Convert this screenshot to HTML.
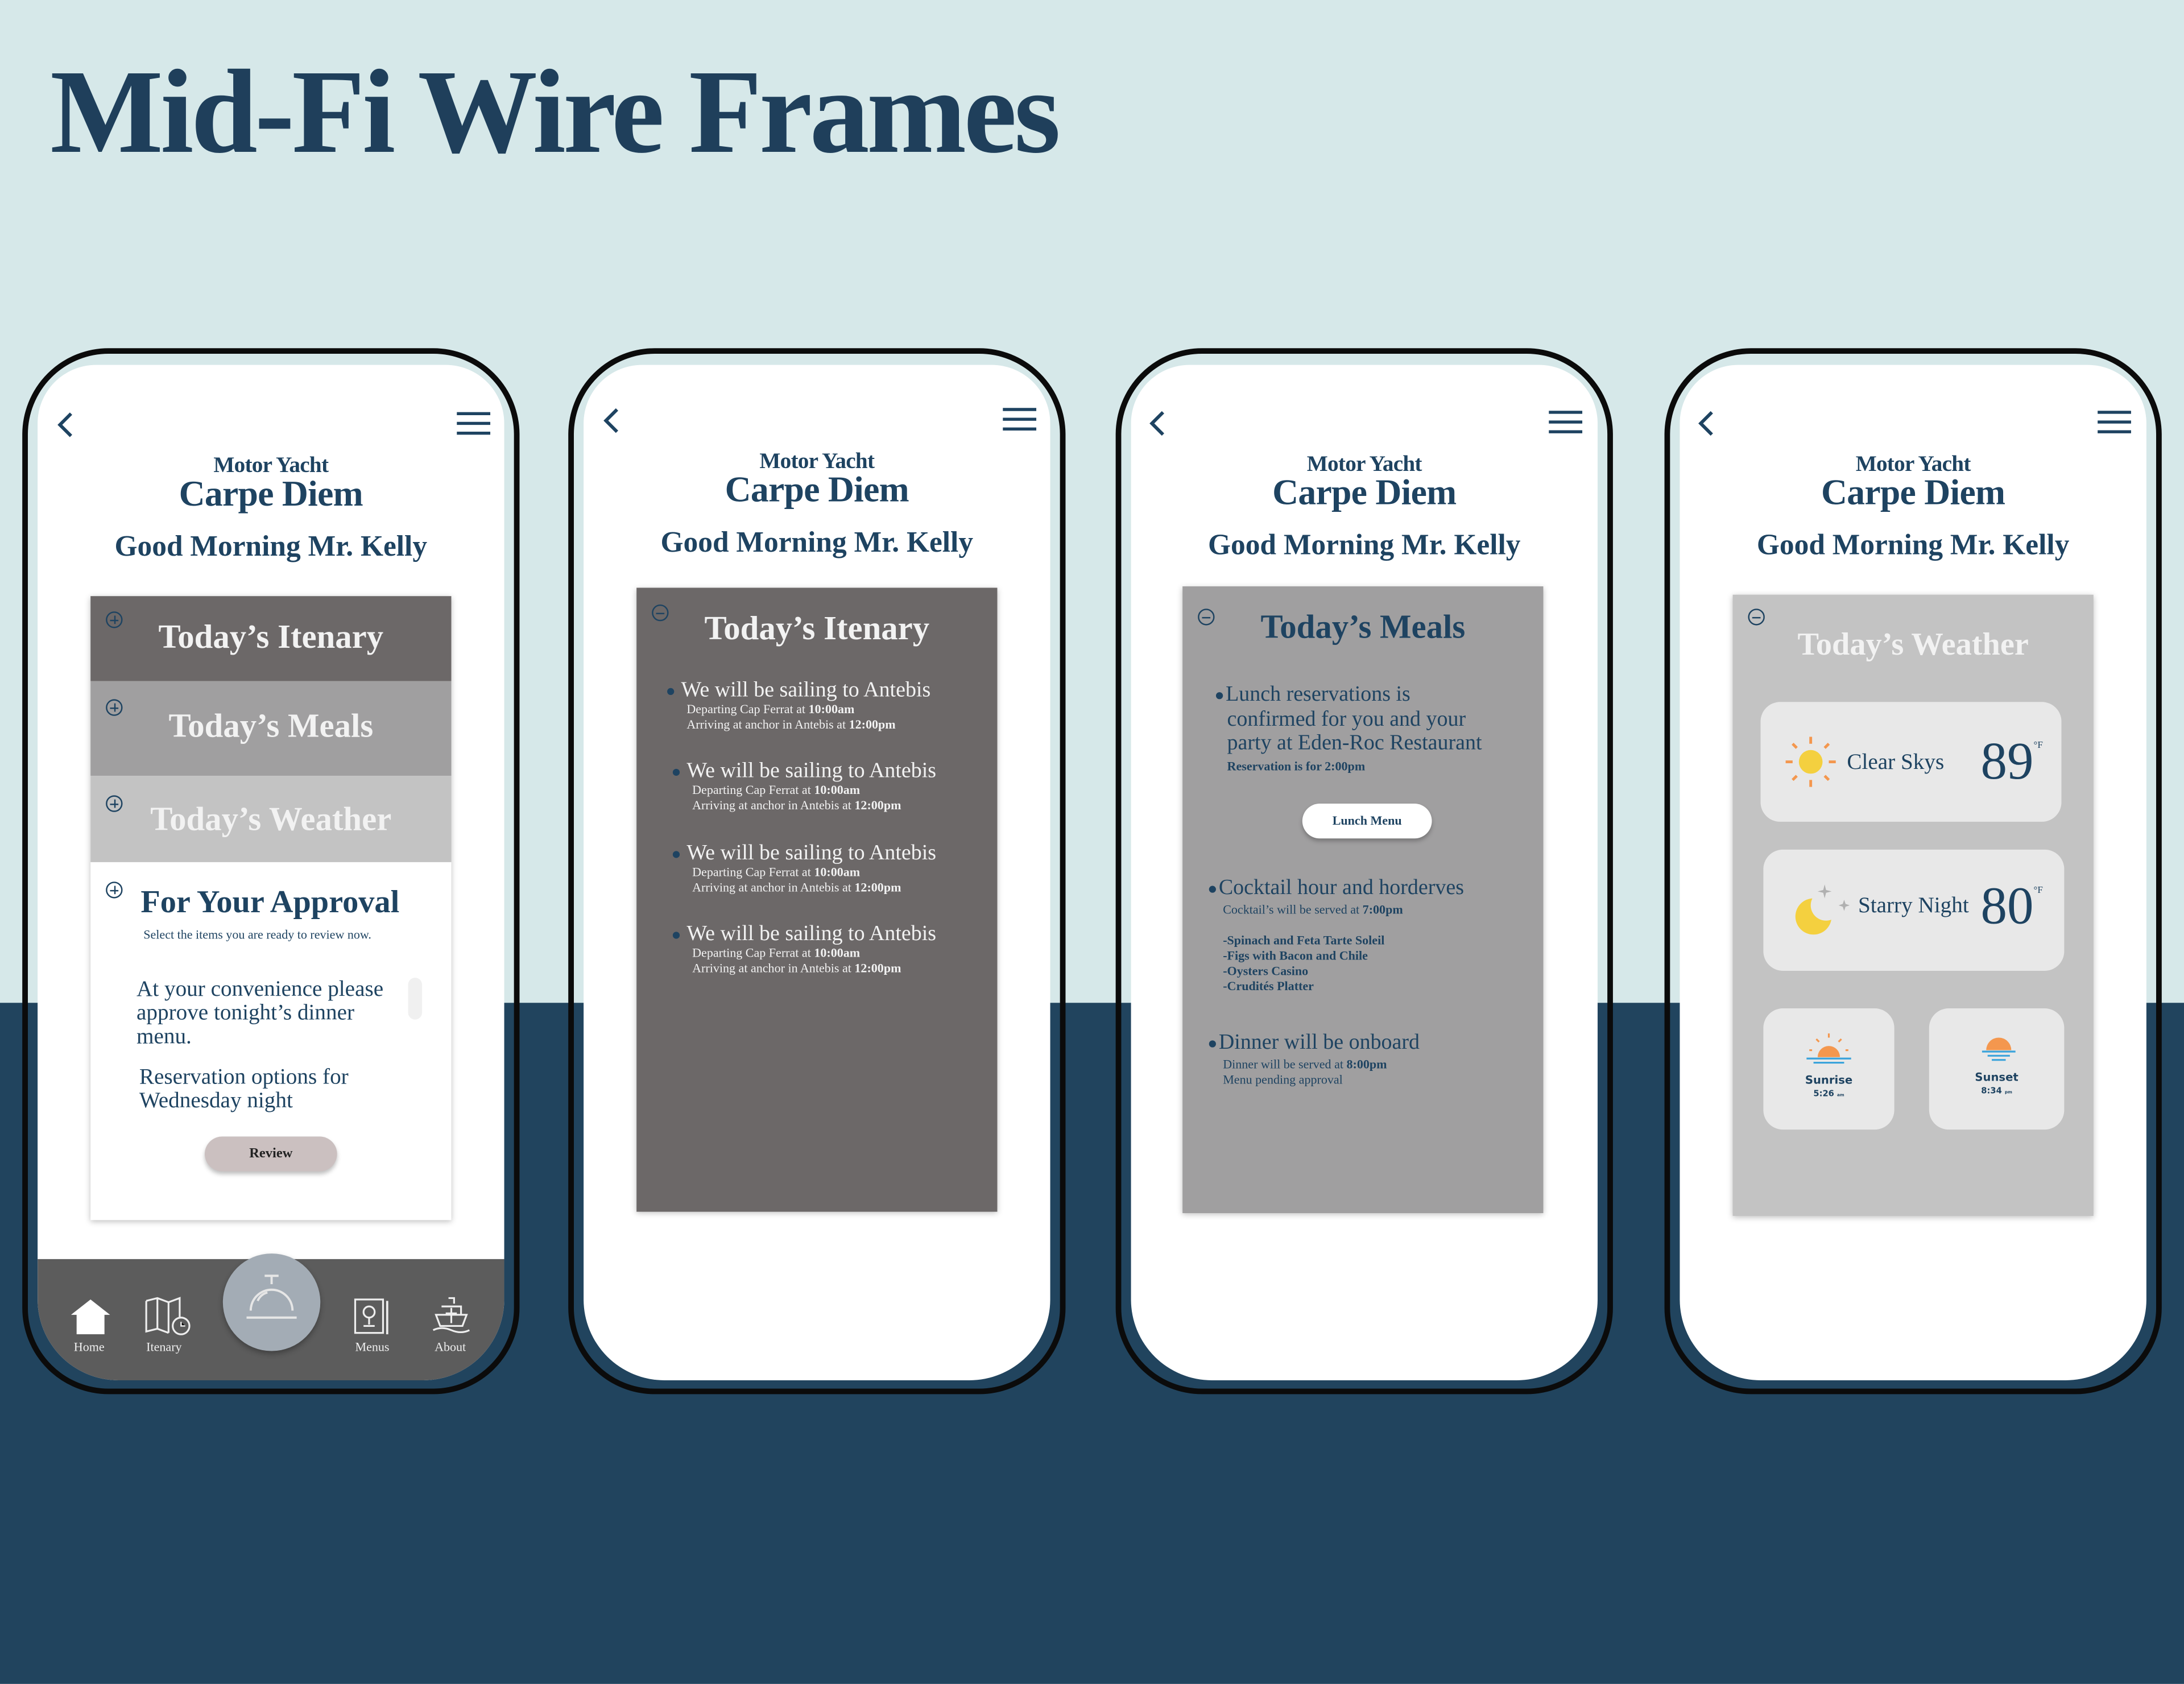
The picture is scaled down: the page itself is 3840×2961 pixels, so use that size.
<!DOCTYPE html>
<html><head><meta charset="utf-8"><style>
*{margin:0;padding:0;box-sizing:border-box}
html,body{width:3840px;height:2960px;overflow:hidden;background:#d6e8e9}
#w{position:absolute;left:0;top:0;width:1568px;height:1209px;transform:scale(2.44898);transform-origin:0 0;background:#d6e8e9;font-family:"Liberation Serif",serif;color:#1e4361}
.a{position:absolute}
.band{left:0;top:720px;width:1568px;height:489px;background:#21445e}
h1{position:absolute;left:36px;top:30px;font-size:86px;font-weight:bold;color:#1f3f5b;letter-spacing:-2px;white-space:nowrap}
.ph{position:absolute;top:250px;width:357px;height:751px;border:4px solid #0b0b0b;border-radius:62px}
.sc{position:absolute;top:8px;left:7px;width:335px;height:729px;background:#fff;border-radius:42px 42px 58px 58px;overflow:hidden}
.c{position:absolute;left:0;width:100%;text-align:center;white-space:nowrap}
.mot{top:64px;font-size:16px;font-weight:bold;letter-spacing:-0.3px}
.car{top:78px;font-size:26px;font-weight:bold;letter-spacing:-0.3px}
.gm{top:118px;font-size:21px;font-weight:bold}
.card{position:absolute;box-shadow:0 1px 4px rgba(0,0,0,.25)}
.pl{position:absolute;width:12px;height:12px;border:1.2px solid #1e4361;border-radius:50%}
.pl:before{content:"";position:absolute;left:2px;top:4.5px;width:6px;height:1.2px;background:#1e4361}
.pl.p:after{content:"";position:absolute;left:4.5px;top:2px;width:1.2px;height:6px;background:#1e4361}
.it{position:absolute;color:#f2f2f2;white-space:nowrap}
.it b{font-weight:bold}
.hd{font-weight:bold}
.dot{display:inline-block;width:5px;height:5px;border-radius:50%;background:#1e4361;margin-right:5px;vertical-align:middle}
.wc{position:absolute;background:#e8e8e8;border-radius:14px}
</style></head><body><div id="w">
<div class="a band"></div>
<h1>Mid-Fi Wire Frames</h1>

<!-- Phone 1 -->
<div class="ph" style="left:16px"><div class="sc">
<svg class="a" style="left:12px;top:32px" width="16" height="22"><path d="M12 3 L4 11 L12 19" stroke="#1e4361" stroke-width="2.4" fill="none"/></svg>
<svg class="a" style="left:300px;top:33px" width="26" height="18"><path d="M1 2H25M1 9H25M1 16H25" stroke="#1e4361" stroke-width="2.2"/></svg>
<div class="c mot">Motor Yacht</div><div class="c car">Carpe Diem</div><div class="c gm">Good Morning Mr. Kelly</div>
<div class="card" style="left:38px;top:166px;width:259px;height:448px;background:#fff"></div>
<div class="a" style="left:38px;top:166px;width:259px;height:61px;background:#6c6868"></div>
<div class="a" style="left:38px;top:227px;width:259px;height:68px;background:#a09fa0"></div>
<div class="a" style="left:38px;top:295px;width:259px;height:62px;background:#c3c3c3"></div>
<div class="pl p" style="left:49px;top:177px"></div><div class="pl p" style="left:49px;top:240px"></div><div class="pl p" style="left:49px;top:309px"></div><div class="pl p" style="left:49px;top:371px"></div>
<div class="it hd" style="left:38px;width:259px;text-align:center;top:183px;font-size:24px">Today’s Itenary</div>
<div class="it hd" style="left:38px;width:259px;text-align:center;top:247px;font-size:24px">Today’s Meals</div>
<div class="it hd" style="left:38px;width:259px;text-align:center;top:314px;font-size:24px">Today’s Weather</div>
<div class="a hd" style="left:74px;top:373px;font-size:23px;white-space:nowrap">For Your Approval</div>
<div class="a" style="left:76px;top:404px;font-size:9px;white-space:nowrap">Select the items you are ready to review now.</div>
<div class="a" style="left:71px;top:440px;font-size:16px;line-height:17px;width:192px">At your convenience please approve tonight’s dinner menu.</div>
<div class="a" style="left:266px;top:440px;width:10px;height:30px;border-radius:5px;background:#f0f0f0"></div>
<div class="a" style="left:73px;top:503px;font-size:16px;line-height:17px;width:200px">Reservation options for Wednesday night</div>
<div class="a" style="left:120px;top:554px;width:95px;height:25px;border-radius:13px;background:#cbc0c0;box-shadow:0 2px 3px rgba(0,0,0,.25);font-size:10px;font-weight:bold;text-align:center;line-height:25px;color:#222">Review</div>
<div class="a" style="left:0;top:642px;width:335px;height:90px;background:#5c5c5c"></div>
<div class="a" style="left:133px;top:638px;width:70px;height:70px;border-radius:50%;background:#a3acb5;box-shadow:0 2px 4px rgba(0,0,0,.3)"></div>
<svg class="a" style="left:145px;top:650px" width="46" height="40"><path d="M18 4H28M23 4V10M8 29A15 15 0 0 1 38 29M5 34H41M13 22A10 10 0 0 1 20 16" stroke="#e6e6e6" stroke-width="1.6" fill="none"/></svg>
<svg class="a" style="left:22px;top:668px" width="32" height="28"><path d="M2 14L16 3L30 14H26V28H6V14Z" fill="#fff"/></svg>
<svg class="a" style="left:76px;top:668px" width="36" height="30"><path d="M2 4L10 2L18 5L26 2V16M2 4V26L10 24L18 27M10 2V24M18 5V27" stroke="#eee" stroke-width="1.3" fill="none"/><circle cx="27" cy="22" r="6" stroke="#eee" stroke-width="1.3" fill="none"/><path d="M27 19V22H30" stroke="#eee" stroke-width="1"/></svg>
<svg class="a" style="left:226px;top:669px" width="28" height="28"><rect x="2" y="2" width="20" height="24" stroke="#eee" stroke-width="1.3" fill="none"/><path d="M25 3V27" stroke="#eee" stroke-width="1.5"/><circle cx="12" cy="11" r="4" stroke="#eee" stroke-width="1.3" fill="none"/><path d="M12 15V20M8 21H16" stroke="#eee" stroke-width="1.3"/></svg>
<svg class="a" style="left:282px;top:668px" width="30" height="28"><path d="M13 2H17V6M8 8H22V14M4 14H26L23 22H7Z M2 25Q8 22 15 25T28 25M15 9V20M11 13H19" stroke="#eee" stroke-width="1.3" fill="none"/></svg>
<div class="a" style="left:26px;top:700px;font-size:9px;color:#eee">Home</div>
<div class="a" style="left:78px;top:700px;font-size:9px;color:#eee">Itenary</div>
<div class="a" style="left:228px;top:700px;font-size:9px;color:#eee">Menus</div>
<div class="a" style="left:285px;top:700px;font-size:9px;color:#eee">About</div>
</div></div>

<!-- Phone 2 -->
<div class="ph" style="left:408px"><div class="sc">
<svg class="a" style="left:12px;top:29px" width="16" height="22"><path d="M12 3 L4 11 L12 19" stroke="#1e4361" stroke-width="2.4" fill="none"/></svg>
<svg class="a" style="left:300px;top:30px" width="26" height="18"><path d="M1 2H25M1 9H25M1 16H25" stroke="#1e4361" stroke-width="2.2"/></svg>
<div class="c mot" style="top:61px">Motor Yacht</div><div class="c car" style="top:75px">Carpe Diem</div><div class="c gm" style="top:115px">Good Morning Mr. Kelly</div>
<div class="card" style="left:38px;top:160px;width:259px;height:448px;background:#6c6868"></div>
<div class="pl" style="left:49px;top:172px"></div>
<div class="it hd" style="left:38px;width:259px;text-align:center;top:177px;font-size:24px">Today’s Itenary</div>
<div class="a" style="left:60px;top:225px">
 <div class="it" style="top:0;left:0;font-size:15.5px"><span class="dot"></span>We will be sailing to Antebis</div>
 <div class="it" style="top:17px;left:14px;font-size:9px;line-height:11px">Departing Cap Ferrat at <b>10:00am</b><br>Arriving at anchor in Antebis at <b>12:00pm</b></div>
 <div class="it" style="top:58px;left:4px;font-size:15.5px"><span class="dot"></span>We will be sailing to Antebis</div>
 <div class="it" style="top:75px;left:18px;font-size:9px;line-height:11px">Departing Cap Ferrat at <b>10:00am</b><br>Arriving at anchor in Antebis at <b>12:00pm</b></div>
 <div class="it" style="top:117px;left:4px;font-size:15.5px"><span class="dot"></span>We will be sailing to Antebis</div>
 <div class="it" style="top:134px;left:18px;font-size:9px;line-height:11px">Departing Cap Ferrat at <b>10:00am</b><br>Arriving at anchor in Antebis at <b>12:00pm</b></div>
 <div class="it" style="top:175px;left:4px;font-size:15.5px"><span class="dot"></span>We will be sailing to Antebis</div>
 <div class="it" style="top:192px;left:18px;font-size:9px;line-height:11px">Departing Cap Ferrat at <b>10:00am</b><br>Arriving at anchor in Antebis at <b>12:00pm</b></div>
</div>
</div></div>

<!-- Phone 3 -->
<div class="ph" style="left:801px"><div class="sc">
<svg class="a" style="left:11px;top:31px" width="16" height="22"><path d="M12 3 L4 11 L12 19" stroke="#1e4361" stroke-width="2.4" fill="none"/></svg>
<svg class="a" style="left:299px;top:32px" width="26" height="18"><path d="M1 2H25M1 9H25M1 16H25" stroke="#1e4361" stroke-width="2.2"/></svg>
<div class="c mot" style="top:63px">Motor Yacht</div><div class="c car" style="top:77px">Carpe Diem</div><div class="c gm" style="top:117px">Good Morning Mr. Kelly</div>
<div class="card" style="left:37px;top:159px;width:259px;height:450px;background:#a09fa0"></div>
<div class="pl" style="left:48px;top:175px"></div>
<div class="a hd" style="left:37px;width:259px;text-align:center;top:176px;font-size:24px;white-space:nowrap">Today’s Meals</div>
<div class="a" style="left:61px;top:228px;font-size:15.5px;line-height:17.5px;width:230px"><span class="dot" style="margin-right:2px"></span>Lunch reservations is<br><span style="padding-left:8px">confirmed for you and your</span><br><span style="padding-left:8px">party at Eden-Roc Restaurant</span></div>
<div class="a" style="left:69px;top:283px;font-size:9px;font-weight:bold;white-space:nowrap">Reservation is for 2:00pm</div>
<div class="a" style="left:123px;top:315px;width:93px;height:25px;border-radius:13px;background:#fff;box-shadow:0 2px 3px rgba(0,0,0,.25);font-size:9px;font-weight:bold;text-align:center;line-height:25px">Lunch Menu</div>
<div class="a" style="left:56px;top:367px;font-size:15.5px;white-space:nowrap"><span class="dot" style="margin-right:2px"></span>Cocktail hour and horderves</div>
<div class="a" style="left:66px;top:386px;font-size:9px;white-space:nowrap">Cocktail’s will be served at <b>7:00pm</b></div>
<div class="a" style="left:66px;top:408px;font-size:9px;line-height:11px;font-weight:bold;white-space:nowrap">-Spinach and Feta Tarte Soleil<br>-Figs with Bacon and Chile<br>-Oysters Casino<br>-Crudités Platter</div>
<div class="a" style="left:56px;top:478px;font-size:15.5px;white-space:nowrap"><span class="dot" style="margin-right:2px"></span>Dinner will be onboard</div>
<div class="a" style="left:66px;top:497px;font-size:9px;line-height:11px;white-space:nowrap">Dinner will be served at <b>8:00pm</b><br>Menu pending approval</div>
</div></div>

<!-- Phone 4 -->
<div class="ph" style="left:1195px"><div class="sc">
<svg class="a" style="left:11px;top:31px" width="16" height="22"><path d="M12 3 L4 11 L12 19" stroke="#1e4361" stroke-width="2.4" fill="none"/></svg>
<svg class="a" style="left:299px;top:32px" width="26" height="18"><path d="M1 2H25M1 9H25M1 16H25" stroke="#1e4361" stroke-width="2.2"/></svg>
<div class="c mot" style="top:63px">Motor Yacht</div><div class="c car" style="top:77px">Carpe Diem</div><div class="c gm" style="top:117px">Good Morning Mr. Kelly</div>
<div class="card" style="left:38px;top:165px;width:259px;height:446px;background:#c3c3c3"></div>
<div class="pl" style="left:49px;top:175px"></div>
<div class="it hd" style="left:38px;width:259px;text-align:center;top:188px;font-size:23px">Today’s Weather</div>
<div class="wc" style="left:58px;top:242px;width:216px;height:86px"></div>
<svg class="a" style="left:74px;top:265px" width="40" height="40"><circle cx="20" cy="20" r="8.5" fill="#f4d03f"/><g stroke="#f4974e" stroke-width="2"><path d="M20 2V7M20 33V38M2 20H7M33 20H38M7 7L10 10M30 30L33 33M33 7L30 10M7 33L10 30"/></g></svg>
<div class="a" style="left:120px;top:277px;font-size:16px;white-space:nowrap">Clear Skys</div>
<div class="a" style="left:216px;top:263px;font-size:38px;white-space:nowrap">89<sup style="font-size:7px;vertical-align:top;position:relative;top:6px">°F</sup></div>
<div class="wc" style="left:60px;top:348px;width:216px;height:87px"></div>
<svg class="a" style="left:80px;top:370px" width="44" height="44"><circle cx="16" cy="26" r="13" fill="#f4d03f"/><circle cx="25" cy="18" r="11" fill="#e8e8e8"/><path d="M24 3L25 7L29 8L25 9L24 13L23 9L19 8L23 7Z M38 14L39 17L42 18L39 19L38 22L37 19L34 18L37 17Z" fill="#b0b0b0"/></svg>
<div class="a" style="left:128px;top:380px;font-size:16px;white-space:nowrap">Starry Night</div>
<div class="a" style="left:216px;top:367px;font-size:38px;white-space:nowrap">80<sup style="font-size:7px;vertical-align:top;position:relative;top:6px">°F</sup></div>
<div class="wc" style="left:60px;top:462px;width:94px;height:87px"></div>
<div class="wc" style="left:179px;top:462px;width:97px;height:87px"></div>
<svg class="a" style="left:90px;top:478px" width="34" height="26"><path d="M9 19A8 8 0 0 1 25 19Z" fill="#f4974e"/><path d="M17 2V5M8 6L10 8M26 6L24 8M3 14H5M29 14H31" stroke="#f4974e" stroke-width="1.3"/><path d="M1 20H33M6 23H28" stroke="#3aa3db" stroke-width="1.3"/></svg>
<div class="a" style="left:60px;width:94px;text-align:center;top:509px;font-family:'DejaVu Sans',sans-serif;font-size:8px;font-weight:bold">Sunrise</div>
<div class="a" style="left:60px;width:94px;text-align:center;top:520px;font-family:'DejaVu Sans',sans-serif;font-size:6px;font-weight:bold">5:26 <span style="font-size:3px">am</span></div>
<svg class="a" style="left:212px;top:478px" width="34" height="26"><path d="M8 14A9 9 0 0 1 26 14Z" fill="#f4974e"/><path d="M5 15H29M9 18H25M12 21H22" stroke="#3aa3db" stroke-width="1.3"/></svg>
<div class="a" style="left:179px;width:97px;text-align:center;top:507px;font-family:'DejaVu Sans',sans-serif;font-size:8px;font-weight:bold">Sunset</div>
<div class="a" style="left:179px;width:97px;text-align:center;top:518px;font-family:'DejaVu Sans',sans-serif;font-size:6px;font-weight:bold">8:34 <span style="font-size:3px">pm</span></div>
</div></div>

</div></body></html>
